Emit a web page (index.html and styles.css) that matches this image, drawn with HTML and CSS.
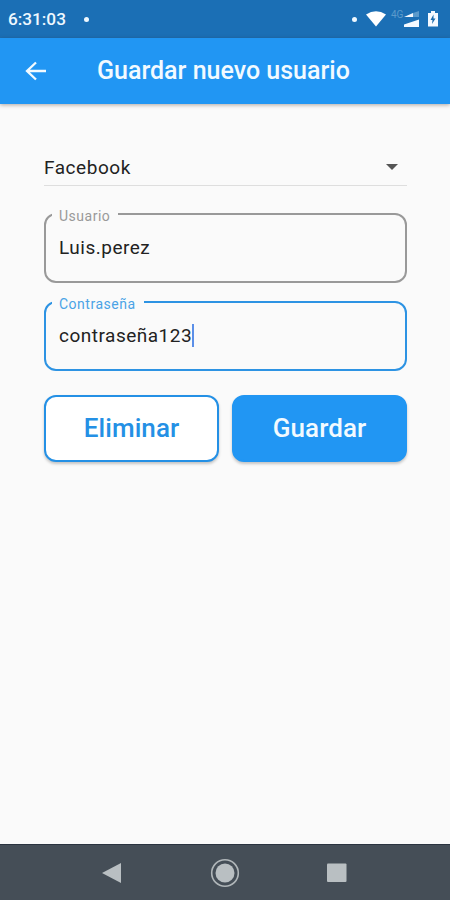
FILE: index.html
```html
<!DOCTYPE html>
<html lang="es">
<head>
<meta charset="utf-8">
<title>Guardar nuevo usuario</title>
<link rel="stylesheet" href="styles.css">
</head>
<body>
<div class="screen">
  <div class="status">
    <span class="clock">6:31:03</span>
    <span class="dot"></span>
    <span class="dot dot-end"></span>
    <svg class="wifi" width="20" height="16" viewBox="0 0 20 16"><path d="M0 3.5Q10-3 20 3.5L10 15.500Z" fill="#fff"/></svg>
    <span class="net">4G</span>
    <svg class="signal" width="16" height="18" viewBox="0 0 16 18"><path d="M9 3l6-2v6H9z" fill="#5b9acb"/><path d="M0 7l9-4v4zM0 17v-2.500l15-5v7.500z" fill="#f4f9ff"/></svg>
    <svg class="battery" width="10" height="16" viewBox="0 0 10 16"><path d="M0 2h3V0h4v2h3v13.500H0z" fill="#f4f9ff"/><path d="M5.500 3.500L2.500 9h2l-.5 4 3.500-5.500h-2z" fill="#1b6bad"/></svg>
  </div>
  <header class="appbar">
    <svg class="back" width="22" height="20" viewBox="0 0 22 20"><path d="M11 1.500L2 10l9 8.500M2 10h19" fill="none" stroke="#f2faff" stroke-width="2.300"/></svg>
    <h1>Guardar nuevo usuario</h1>
  </header>
  <main>
    <div class="select"><span>Facebook</span><svg width="12" height="6" viewBox="0 0 12 6"><path d="M0 0h12L6 6z" fill="#555"/></svg></div>
    <fieldset class="field"><legend><span>Usuario</span></legend><div class="value"><span class="user">Luis.perez</span></div></fieldset>
    <fieldset class="field focus"><legend><span>Contraseña</span></legend><div class="value"><span class="pass">contraseña123</span><i class="caret"></i></div></fieldset>
    <div class="actions"><button class="btn outline">Eliminar</button><button class="btn solid">Guardar</button></div>
  </main>
  <nav class="navbar">
    <svg width="20" height="20" viewBox="0 0 20 20"><path d="M0 10L19 0v20z" fill="#b9bfc2"/></svg>
    <svg width="30" height="30" viewBox="0 0 30 30"><circle cx="15" cy="15" r="13.300" fill="none" stroke="#b0b6b9" stroke-width="1.600"/><circle cx="15" cy="15" r="9.500" fill="#b9bfc2"/></svg>
    <svg width="20" height="20" viewBox="0 0 20 20"><rect y=".5" width="19.500" height="18.500" rx="1" fill="#b9bfc2"/></svg>
  </nav>
</div>
</body>
</html>
```
FILE: styles.css
```css
* { box-sizing: border-box; }
body { margin: 0; font-family: Roboto, "Liberation Sans", sans-serif; background: #fafafa; }
.screen { width: 450px; height: 900px; display: flex; flex-direction: column; }
svg { display: block; flex: none; }
.status { height: 38px; background: #1b6fb5; color: #eef8ff; display: flex; align-items: center; padding: 0 12px 0 8px; flex: none; }
.clock { font-size: 17.2px; font-weight: 500; width: 76px; white-space: nowrap; }
.dot { width: 5px; height: 5px; border-radius: 50%; background: #eef8ff; }
.dot-end { margin-left: auto; }
.wifi { margin-left: 9px; }
.net { font-size: 10px; color: #5b9acb; margin: -9px 0 0 5px; width: 13px; }
.battery { margin-left: 8px; }
.appbar { height: 66px; background: #2196f3; display: flex; align-items: center; padding-left: 25px; flex: none; box-shadow: 0 1px 4px rgba(60,40,30,.4); }
h1 { margin: 0 0 0 50px; font-size: 25px; font-weight: 500; line-height: 30px; color: #f2faff; white-space: nowrap; }
main { flex: 1; padding: 45px 43px 0 44px; color: #222; }
.select { height: 37px; border-bottom: 1px solid #dedede; display: flex; align-items: center; justify-content: space-between; padding-right: 9px; font-size: 19px; letter-spacing: .55px; }
.field { margin: 21px 0 0; padding: 0; height: 76px; min-width: 0; border: 2px solid #999; border-radius: 12px; }
.field + .field { margin-top: 12px; }
.field.focus { border-color: #2d93e3; }
legend { margin-left: 6px; padding: 0 8px 0 7px; height: 14px; font-size: 14px; line-height: 14px; letter-spacing: .5px; color: #999; }
legend span { position: relative; top: 2px; }
.focus legend { color: #4aa3e6; }
.value { display: flex; align-items: center; height: 24px; margin: 14px 0 0 13px; font-size: 19px; letter-spacing: .5px; }
.caret { width: 2px; height: 23px; background: #5b8fe8; }
.actions { display: flex; gap: 13px; margin-top: 24px; }
.btn { flex: 1; height: 67px; padding: 0 0 2px; border-radius: 12px; border: 2px solid #2490e5; font: 500 26px Roboto, sans-serif; letter-spacing: .1px; box-shadow: 0 2px 3px rgba(0,0,0,.22); }
.outline { background: #fff; color: #2490e5; }
.solid { background: #2196f3; border-color: #2196f3; color: #f2faff; }
.navbar { height: 56px; flex: none; background: #454e57; border-top: 1px solid #2b3440; display: flex; align-items: center; justify-content: space-between; padding: 0 103px 0 102px; }
```
